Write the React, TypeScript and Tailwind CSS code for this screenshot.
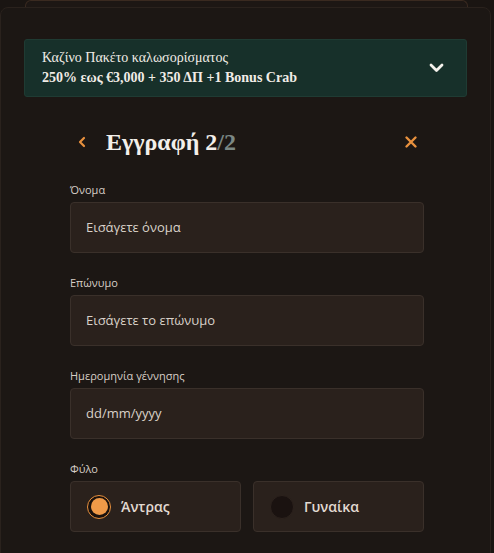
import React from 'react';

const serif = 'font-["Liberation_Serif","DejaVu_Serif",serif]';
const sans = 'font-["Open_Sans","Noto_Sans",sans-serif]';

function Field({ label, placeholder }: { label: string; placeholder: string }) {
  return (
    <div className="flex flex-col">
      <label className={`${sans} mb-[5px] text-[11px] leading-[14px] text-[#d6cec6]`}>{label}</label>
      <div className="flex h-[51px] items-center rounded-[4px] border border-[#3a302a] bg-[#2a211c] px-[15px]">
        <span className={`${sans} text-[13px] text-[#d9d1c9]`}>{placeholder}</span>
      </div>
    </div>
  );
}

function Radio({ label, checked }: { label: string; checked?: boolean }) {
  return (
    <div className="flex h-[51px] flex-1 items-center gap-[10px] rounded-[4px] border border-[#3a302a] bg-[#2a211c] px-[16px]">
      {checked ? (
        <span className="grid h-[24px] w-[24px] place-items-center rounded-full border border-[#e8913e] bg-[#1a110d]">
          <span className="h-[17px] w-[17px] rounded-full bg-[#f09a48]" />
        </span>
      ) : (
        <span className="h-[24px] w-[24px] rounded-full border border-[#2c221d] bg-[#1a1210]" />
      )}
      <span className={`${sans} text-[14px] font-semibold text-[#e2dad2]`}>{label}</span>
    </div>
  );
}

export default function App() {
  return (
    <div className="h-[553px] w-[494px] overflow-hidden bg-[#1a1512]">
      {/* card stacked behind */}
      <div className="ml-[25px] h-[7px] w-[443px] rounded-t-[6px] border-x border-t border-[#3a2a20] bg-[#1d1714]" />

      <div className="w-[491px] rounded-[8px] border border-[#2a221d] bg-[#1c1714] pb-[40px]">
        <div className="px-[23px] pt-[31px]">
          <div className="flex h-[58px] items-center justify-between rounded-[3px] border border-[#1f3b33] bg-[#17302a] pl-[17px] pr-[22px]">
            <div className={`${serif} text-[#f1ece6]`}>
              <p className="text-[14px] leading-[20px]">Καζίνο Πακέτο καλωσορίσματος</p>
              <p className="text-[14px] font-bold leading-[20px]">250% εως €3,000 + 350 ΔΠ +1 Bonus Crab</p>
            </div>
            <svg width="15" height="10" viewBox="0 0 15 10" fill="none">
              <path d="M2 2l5.5 5.5L13 2" stroke="#f4f1ec" strokeWidth="2.8" strokeLinecap="round" strokeLinejoin="round" />
            </svg>
          </div>
        </div>

        <div className="pl-[69px] pr-[66px]">
          <div className="mt-[30px] flex h-[30px] items-center">
            <svg width="10" height="12" viewBox="0 0 10 12" fill="none" className="ml-[7px]">
              <path d="M7 2L3 6l4 4" stroke="#e8913e" strokeWidth="2.2" strokeLinecap="round" strokeLinejoin="round" />
            </svg>
            <h1 className={`${serif} ml-[19px] text-[24px] font-bold text-[#f3efea]`}>
              Εγγραφή 2<span className="text-[#7b8884]">/2</span>
            </h1>
            <svg width="14" height="14" viewBox="0 0 14 14" fill="none" className="ml-auto mr-[6px]">
              <path d="M2.5 2.5l9 9M11.5 2.5l-9 9" stroke="#e8913e" strokeWidth="2.4" strokeLinecap="round" />
            </svg>
          </div>

          <div className="mt-[26px] flex flex-col gap-[23px]">
            <Field label="Όνομα" placeholder="Εισάγετε όνομα" />
            <Field label="Επώνυμο" placeholder="Εισάγετε το επώνυμο" />
            <Field label="Ημερομηνία γέννησης" placeholder="dd/mm/yyyy" />
            <div className="flex flex-col">
              <label className={`${sans} mb-[5px] text-[11px] leading-[14px] text-[#d6cec6]`}>Φύλο</label>
              <div className="flex gap-[12px]">
                <Radio label="Άντρας" checked />
                <Radio label="Γυναίκα" />
              </div>
            </div>
          </div>
        </div>
      </div>
    </div>
  );
}
